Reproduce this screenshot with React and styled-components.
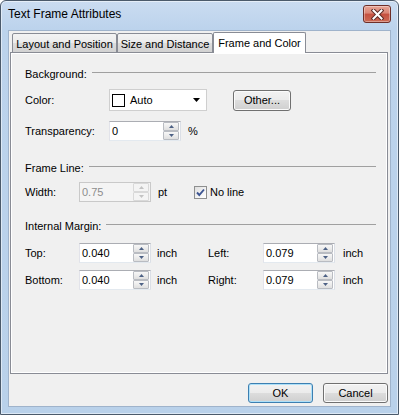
import styled, { createGlobalStyle } from 'styled-components';

const GlobalStyle = createGlobalStyle`
    html, body {
        margin: 0;
        padding: 0;
        background: #ffffff;
    }
    body {
        font-family: "Liberation Sans", Arial, sans-serif;
        font-size: 11px;
        color: #000000;
    }
`;

// small triangle used by the spinners and the dropdown
function Arrow({ up, color = '#4d6185', w = 7, h = 4 }) {
    return (
        <svg width={w} height={h} viewBox={`0 0 ${w} ${h}`}>
            <polygon
                points={up ? `0,${h} ${w},${h} ${w / 2},0` : `0,0 ${w},0 ${w / 2},${h}`}
                fill={color}
            />
        </svg>
    );
}

function SpinField({ value, disabled }) {
    const arrowColor = disabled ? '#c3c3c3' : '#4d6185';
    return (
        <SpinBox $disabled={disabled}>
            <SpinText $disabled={disabled}>{value}</SpinText>
            <SpinButtons>
                <SpinButton $disabled={disabled}>
                    <Arrow up color={arrowColor} w={5} h={3} />
                </SpinButton>
                <SpinButton $disabled={disabled}>
                    <Arrow color={arrowColor} w={5} h={3} />
                </SpinButton>
            </SpinButtons>
        </SpinBox>
    );
}

function SectionHeader({ children }) {
    return (
        <Header>
            <span>{children}</span>
            <HeaderLine />
        </Header>
    );
}

function App() {
    return (
        <>
            <GlobalStyle />
            <Window>
                <TitleBar>
                    <Title>Text Frame Attributes</Title>
                    <CloseButton>
                        <svg width='13' height='11' viewBox='0 0 13 11'>
                            <path d='M2.5 1.5 L10.5 9.5 M10.5 1.5 L2.5 9.5' stroke='#5b2a25' strokeWidth='4' strokeLinecap='square' />
                            <path d='M2.5 1.5 L10.5 9.5 M10.5 1.5 L2.5 9.5' stroke='#ffffff' strokeWidth='2' strokeLinecap='square' />
                        </svg>
                    </CloseButton>
                </TitleBar>

                <Client>
                    <TabStrip>
                        <Tab $w={105}>Layout and Position</Tab>
                        <Tab $w={96}>Size and Distance</Tab>
                        <Tab $w={93} $active>Frame and Color</Tab>
                    </TabStrip>

                    <Panel>
                        <Section $gap={8}>
                            <SectionHeader>Background:</SectionHeader>
                            <Rows $gap={10}>
                                <Row>
                                    <Label $w={84}>Color:</Label>
                                    <ColorSelect>
                                        <Swatch />
                                        <SelectText>Auto</SelectText>
                                        <Arrow color='#000000' w={7} h={4} />
                                    </ColorSelect>
                                    <Button $w={58} $h={21} style={{ marginLeft: 26 }}>Other...</Button>
                                </Row>
                                <Row>
                                    <Label $w={84}>Transparency:</Label>
                                    <SpinField value='0' />
                                    <Unit $pad={7}>%</Unit>
                                </Row>
                            </Rows>
                        </Section>

                        <Section $gap={7} $top={20}>
                            <SectionHeader>Frame Line:</SectionHeader>
                            <Row>
                                <Label $w={54}>Width:</Label>
                                <SpinField value='0.75' disabled />
                                <Unit $pad={7} $w={43}>pt</Unit>
                                <CheckBox>
                                    <svg width='11' height='11' viewBox='0 0 11 11'>
                                        <path d='M2 5.5 L4.3 8 L9 2.5' stroke='#3d5592' strokeWidth='1.9' fill='none' />
                                    </svg>
                                </CheckBox>
                                <Unit $pad={3}>No line</Unit>
                            </Row>
                        </Section>

                        <Section $gap={10} $top={17}>
                            <SectionHeader>Internal Margin:</SectionHeader>
                            <MarginGrid>
                                <Label>Top:</Label>
                                <SpinField value='0.040' />
                                <Unit $pad={6}>inch</Unit>
                                <Label>Left:</Label>
                                <SpinField value='0.079' />
                                <Unit $pad={8}>inch</Unit>

                                <Label>Bottom:</Label>
                                <SpinField value='0.040' />
                                <Unit $pad={6}>inch</Unit>
                                <Label>Right:</Label>
                                <SpinField value='0.079' />
                                <Unit $pad={8}>inch</Unit>
                            </MarginGrid>
                        </Section>
                    </Panel>

                    <Footer>
                        <Button $w={65} $h={20} $default>OK</Button>
                        <Button $w={65} $h={20}>Cancel</Button>
                    </Footer>
                </Client>
            </Window>
        </>
    );
}

const Window = styled.div`
    width: 399px;
    height: 415px;
    box-sizing: border-box;
    display: flex;
    flex-direction: column;
    padding: 0 7px 7px;
    border: 1px solid #4b5a6b;
    border-radius: 6px 6px 0 0;
    background: linear-gradient(to bottom, #cadcf1 0, #bcd3ec 28px, #b9d1ea 100%);
    box-shadow: inset 0 0 0 1px rgba(255, 255, 255, 0.5);
`;

const TitleBar = styled.div`
    height: 29px;
    flex-shrink: 0;
    display: flex;
    justify-content: space-between;
    align-items: flex-start;
`;

const Title = styled.span`
    font-size: 12px;
    line-height: 27px;
    color: #000000;
`;

const CloseButton = styled.div`
    margin-top: 4px;
    width: 28px;
    height: 18px;
    box-sizing: border-box;
    border: 1px solid #6e2e28;
    border-radius: 3px;
    background: linear-gradient(to bottom, #e8a596 0%, #d98474 45%, #c5503f 50%, #cb6a55 100%);
    box-shadow: inset 0 0 0 1px rgba(255, 255, 255, 0.35);
    display: flex;
    align-items: center;
    justify-content: center;
`;

const Client = styled.div`
    flex: 1;
    display: flex;
    flex-direction: column;
    background: #f0f0f0;
    border: 1px solid #9fb3cb;
    padding: 1px 2px 0 1px;
`;

const TabStrip = styled.div`
    height: 21px;
    display: flex;
    align-items: flex-end;
    padding-left: 2px;
    margin-bottom: -1px;
    position: relative;
    z-index: 1;
`;

const Tab = styled.div`
    width: ${(p) => p.$w}px;
    height: ${(p) => (p.$active ? 21 : 20)}px;
    box-sizing: border-box;
    border: 1px solid #898c95;
    border-bottom: ${(p) => (p.$active ? 'none' : '1px solid #898c95')};
    border-radius: 2px 2px 0 0;
    background: ${(p) =>
        p.$active
            ? '#ffffff'
            : 'linear-gradient(to bottom, #f3f3f3 0%, #ebebeb 50%, #dddddd 50%, #d2d2d2 100%)'};
    display: flex;
    align-items: center;
    justify-content: center;
    white-space: nowrap;
    padding-top: ${(p) => (p.$active ? 0 : 1)}px;
`;

const Panel = styled.div`
    flex: 1;
    display: flex;
    flex-direction: column;
    border: 1px solid #898c95;
    box-shadow: inset 0 0 0 1px #ffffff;
    background: #f0f0f0;
    padding: 14px 11px 0 14px;
`;

const Section = styled.div`
    display: flex;
    flex-direction: column;
    gap: ${(p) => p.$gap}px;
    margin-top: ${(p) => p.$top || 0}px;
`;

const Header = styled.div`
    height: 14px;
    display: flex;
    align-items: center;
    gap: 5px;
    white-space: nowrap;
`;

const HeaderLine = styled.div`
    flex: 1;
    height: 1px;
    margin-bottom: 4px;
    background: #a0a0a0;
`;

const Rows = styled.div`
    display: flex;
    flex-direction: column;
    gap: ${(p) => p.$gap}px;
`;

const Row = styled.div`
    display: flex;
    align-items: center;
`;

const Label = styled.span`
    width: ${(p) => (p.$w ? `${p.$w}px` : 'auto')};
    flex-shrink: 0;
    white-space: nowrap;
`;

const Unit = styled.span`
    padding-left: ${(p) => p.$pad}px;
    width: ${(p) => (p.$w ? `${p.$w}px` : 'auto')};
    box-sizing: border-box;
    white-space: nowrap;
`;

const ColorSelect = styled.div`
    width: 98px;
    height: 22px;
    box-sizing: border-box;
    border: 1px solid #cfcfcf;
    background: #ffffff;
    display: flex;
    align-items: center;
    padding: 0 6px 0 2px;
`;

const Swatch = styled.div`
    width: 13px;
    height: 13px;
    box-sizing: border-box;
    border: 1px solid #000000;
    background: #ffffff;
    margin-right: 5px;
`;

const SelectText = styled.span`
    flex: 1;
`;

const SpinBox = styled.div`
    width: 72px;
    height: 20px;
    box-sizing: border-box;
    flex-shrink: 0;
    display: flex;
    border: 1px solid;
    border-color: ${(p) => (p.$disabled ? '#c9c9c9' : '#abadb3 #dbdfe6 #e3e9ef #e2e3ea')};
    background: ${(p) => (p.$disabled ? '#f4f4f4' : '#ffffff')};
`;

const SpinText = styled.span`
    flex: 1;
    padding-left: 2px;
    line-height: 18px;
    color: ${(p) => (p.$disabled ? '#8d8d8d' : '#000000')};
`;

const SpinButtons = styled.div`
    width: 16px;
    display: flex;
    flex-direction: column;
    margin-right: 1px;
`;

const SpinButton = styled.div`
    flex: 1;
    box-sizing: border-box;
    border: 1px solid ${(p) => (p.$disabled ? '#d9d9d9' : '#b9bcc2')};
    border-radius: 1px;
    background: ${(p) =>
        p.$disabled ? '#f4f4f4' : 'linear-gradient(to bottom, #f7f7f7 0%, #ececec 50%, #dfdfdf 100%)'};
    display: flex;
    align-items: center;
    justify-content: center;
`;

const CheckBox = styled.div`
    width: 13px;
    height: 13px;
    box-sizing: border-box;
    border: 1px solid #8e8f8f;
    background: linear-gradient(135deg, #dedede 0%, #f4f4f4 60%, #ffffff 100%);
    display: flex;
    align-items: center;
    justify-content: center;
`;

const MarginGrid = styled.div`
    display: grid;
    grid-template-columns: 54px 72px 57px 55px 72px auto;
    row-gap: 7px;
    align-items: center;
`;

const Button = styled.div`
    width: ${(p) => p.$w}px;
    height: ${(p) => p.$h}px;
    box-sizing: border-box;
    flex-shrink: 0;
    border: 1px solid ${(p) => (p.$default ? '#3c7fb1' : '#707070')};
    border-radius: 3px;
    background: linear-gradient(to bottom, #f2f2f2 0%, #ebebeb 50%, #dddddd 50%, #cfcfcf 100%);
    box-shadow: inset 0 0 0 1px ${(p) => (p.$default ? '#aee0f8' : '#fbfbfb')};
    display: flex;
    align-items: center;
    justify-content: center;
`;

const Footer = styled.div`
    display: flex;
    justify-content: flex-end;
    gap: 10px;
    padding: 9px 0 3px;
`;

export default App;
